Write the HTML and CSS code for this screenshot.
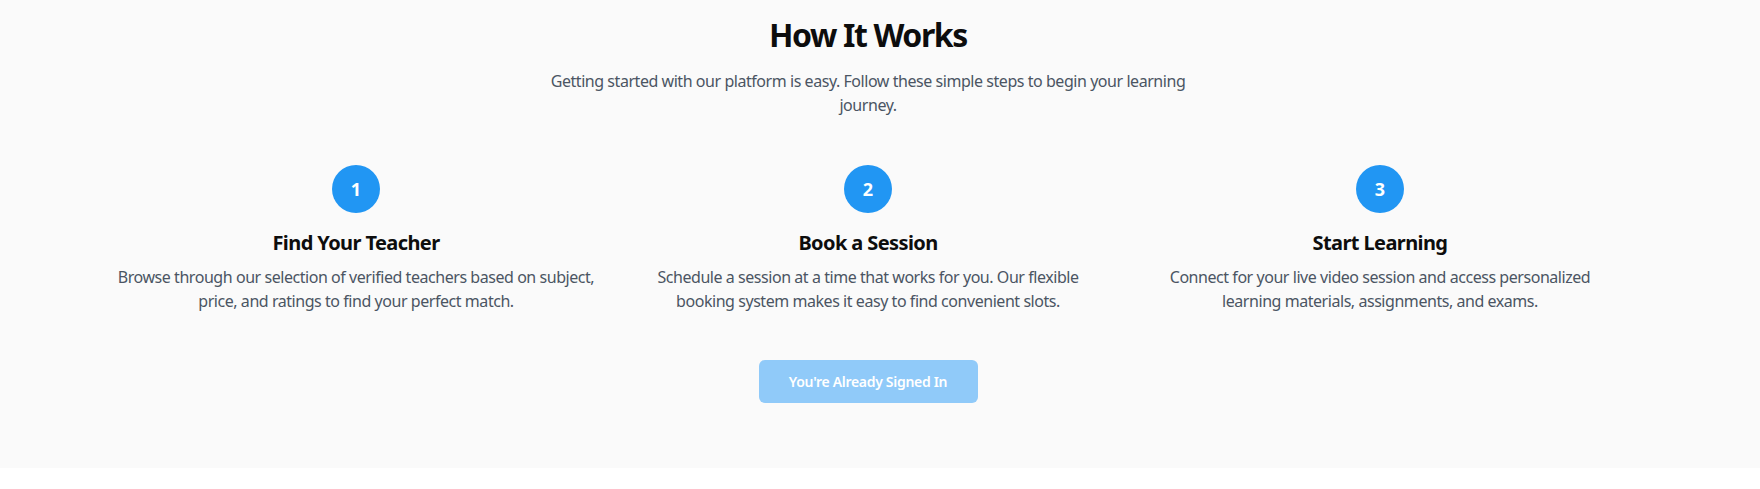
FILE: index.html
```html
<!DOCTYPE html>
<html lang="en">
<head>
<meta charset="utf-8">
<title>How It Works</title>
<link rel="stylesheet" href="styles.css">
</head>
<body>
<section class="how">
  <div class="container">
    <h2 class="how-title">How It Works</h2>
    <p class="how-sub">Getting started with our platform is easy. Follow these simple steps to begin your learning journey.</p>
    <div class="steps">
      <div class="step">
        <div class="step-num">1</div>
        <h3 class="step-title">Find Your Teacher</h3>
        <p class="step-text">Browse through our selection of verified teachers based on subject, price, and ratings to find your perfect match.</p>
      </div>
      <div class="step">
        <div class="step-num">2</div>
        <h3 class="step-title">Book a Session</h3>
        <p class="step-text">Schedule a session at a time that works for you. Our flexible booking system makes it easy to find convenient slots.</p>
      </div>
      <div class="step">
        <div class="step-num">3</div>
        <h3 class="step-title">Start Learning</h3>
        <p class="step-text">Connect for your live video session and access personalized learning materials, assignments, and exams.</p>
      </div>
    </div>
    <div class="cta">
      <button class="cta-btn" disabled>You're Already Signed In</button>
    </div>
  </div>
</section>
</body>
</html>
```

FILE: styles.css
```css
* { box-sizing: border-box; }
html, body { margin: 0; padding: 0; background: #ffffff; }
body {
  font-family: "Noto Sans", "Open Sans", sans-serif;
  color: #111111;
}
.how {
  background: #fafafa;
  padding: 15px 24px 65px 0;
}
.container {
  max-width: 1536px;
  margin: 0 auto;
  padding: 0 16px;
}
.how-title {
  margin: 0;
  text-align: center;
  font-size: 32px;
  line-height: 40px;
  font-weight: 700;
  letter-spacing: -1.4px;
  color: #0d0d0d;
}
.how-sub {
  max-width: 640px;
  margin: 14px auto 0;
  text-align: center;
  font-size: 16px;
  line-height: 24px;
  letter-spacing: -0.45px;
  color: #4b5563;
}
.steps {
  display: grid;
  grid-template-columns: repeat(3, 1fr);
  gap: 32px;
  margin-top: 48px;
}
.step {
  display: flex;
  flex-direction: column;
  align-items: center;
  text-align: center;
}
.step-num {
  width: 48px;
  height: 48px;
  border-radius: 50%;
  background: #2196f3;
  color: #ffffff;
  font-weight: 700;
  font-size: 18px;
  display: flex;
  align-items: center;
  justify-content: center;
}
.step-title {
  margin: 16px 0 8px;
  font-size: 20px;
  line-height: 28px;
  font-weight: 700;
  letter-spacing: -0.6px;
  color: #0d0d0d;
}
.step-text {
  margin: 0;
  font-size: 16px;
  line-height: 24px;
  letter-spacing: -0.45px;
  color: #4b5563;
}
.cta {
  display: flex;
  justify-content: center;
  margin-top: 47px;
}
.cta-btn {
  font-family: inherit;
  background: #90caf9;
  color: #ffffff;
  border: 0;
  border-radius: 6px;
  width: 219px;
  height: 43px;
  font-size: 14px;
  font-weight: 600;
  letter-spacing: -0.3px;
  padding: 0 16px;
  cursor: default;
}
```
